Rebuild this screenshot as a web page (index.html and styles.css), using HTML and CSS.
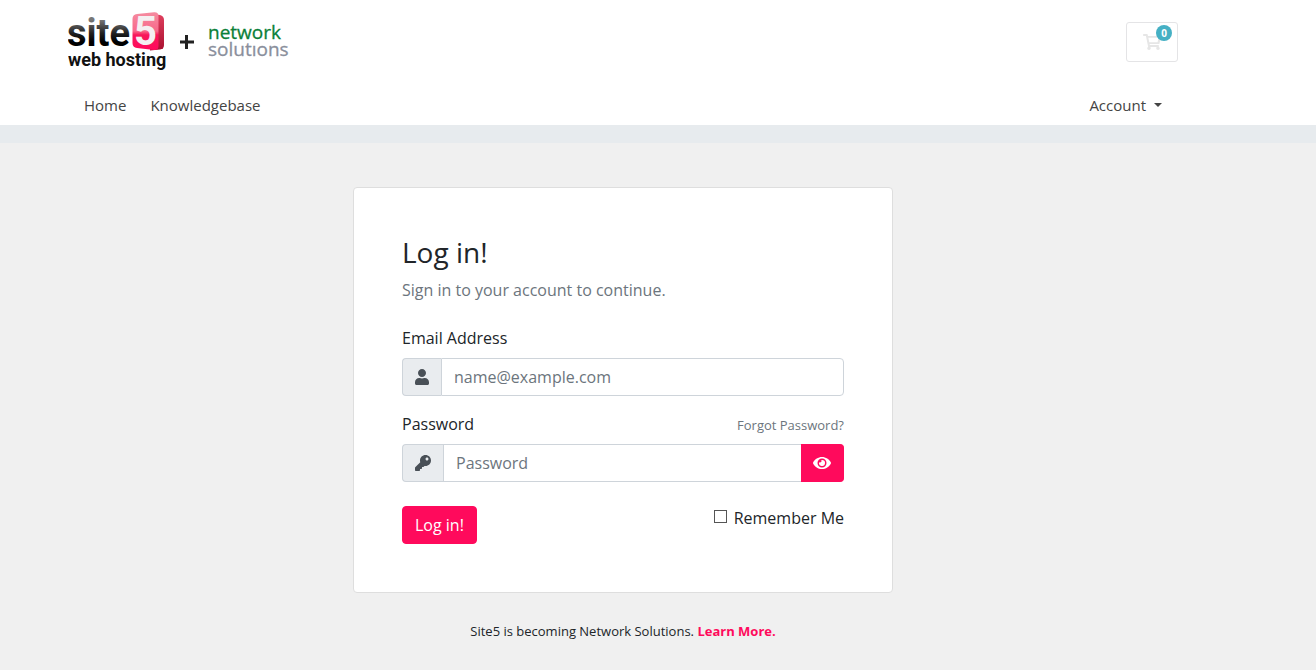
FILE: index.html
```html
<!DOCTYPE html>
<html lang="en">
<head>
<meta charset="utf-8">
<meta name="viewport" content="width=device-width, initial-scale=1">
<title>Log in - Site5</title>
<link rel="stylesheet" href="styles.css">
</head>
<body>
<header class="header">
  <div class="container topbar">
    <a class="brand" href="#" aria-label="Site5 web hosting and Network Solutions">
      <svg class="logo" width="226" height="64" viewBox="0 0 226 64">
        <defs>
          <linearGradient id="ink" x1="0" y1="0" x2="0" y2="1">
            <stop offset="0.2" stop-color="#777"/><stop offset="0.5" stop-color="#222"/><stop offset="0.7" stop-color="#000"/>
          </linearGradient>
          <linearGradient id="face" x1="0" y1="0" x2="0" y2="1">
            <stop offset="0" stop-color="#f58ca0"/><stop offset="0.5" stop-color="#f8688a"/><stop offset="0.6" stop-color="#f8175a"/><stop offset="1" stop-color="#ff0a5c"/>
          </linearGradient>
          <linearGradient id="side" x1="0" y1="0" x2="0" y2="1">
            <stop offset="0" stop-color="#e0405e"/><stop offset="1" stop-color="#a80f2f"/>
          </linearGradient>
        </defs>
        <text class="logo-site" x="-1" y="38" fill="url(#ink)">site</text>
        <path d="M84 6l8 1q4 1 4 5v25q0 4-4 4.500l-10 1z" fill="url(#side)"/>
        <path d="M69 6l17-1.800q4.500-.4 4.500 4V38q0 4.500-4.500 4L69 40q-4.500-.5-4.500-5V11q0-4.500 4.500-5z" fill="url(#face)"/>
        <text class="logo-five" x="66" y="37">5</text>
        <text class="logo-sub" x="0" y="58">web hosting</text>
        <path d="M118.500 27v14M112 34h14" stroke="#222" stroke-width="3"/>
        <text class="logo-network" x="140" y="31">network</text>
        <text class="logo-solutions" x="140" y="48">solutıons</text>
      </svg>
    </a>
    <button class="cart" type="button" aria-label="Shopping cart">
      <svg width="18" height="16" viewBox="0 0 576 512" fill="currentColor"><path d="M528.120 301.319l47.273-208C578.806 78.301 567.391 64 551.990 64H159.208l-9.166-44.810C147.758 8.021 137.930 0 126.529 0H24C10.745 0 0 10.745 0 24v16c0 13.255 10.745 24 24 24h69.883l70.248 343.435C147.325 417.100 136 435.222 136 456c0 30.928 25.072 56 56 56s56-25.072 56-56c0-15.674-6.447-29.835-16.824-40h209.647C430.447 426.165 424 440.326 424 456c0 30.928 25.072 56 56 56s56-25.072 56-56c0-22.172-12.888-41.332-31.579-50.405l5.517-24.276c3.413-15.018-8.002-29.319-23.403-29.319H218.117l-6.545-32h293.145c11.206 0 20.920-7.754 23.403-18.681zM171 122h327l-31 144H200z" fill-rule="evenodd"/></svg>
      <span class="badge">0</span>
    </button>
  </div>
  <nav class="container nav">
    <a href="#">Home</a>
    <a href="#">Knowledgebase</a>
    <a class="account" href="#">Account</a>
  </nav>
</header>
<div class="strip"></div>
<main class="main">
  <form class="card">
    <h1>Log in!</h1>
    <p class="lead">Sign in to your account to continue.</p>
    <label class="label" for="email">Email Address</label>
    <div class="group">
      <span class="addon"><svg width="14" height="16" viewBox="0 0 448 512" fill="currentColor"><path d="M224 256c70.700 0 128-57.300 128-128S294.700 0 224 0 96 57.300 96 128s57.300 128 128 128zm89.600 32h-16.700c-22.200 10.200-46.900 16-72.900 16s-50.600-5.800-72.900-16h-16.700C60.200 288 0 348.200 0 422.400V464c0 26.500 21.500 48 48 48h352c26.500 0 48-21.500 48-48v-41.600c0-74.200-60.200-134.400-134.400-134.400z"/></svg></span>
      <input class="input input-last" id="email" type="email" placeholder="name@example.com">
    </div>
    <div class="label-row">
      <label class="label" for="password">Password</label>
      <a class="forgot" href="#">Forgot Password?</a>
    </div>
    <div class="group">
      <span class="addon"><svg width="16" height="16" viewBox="0 0 512 512" fill="currentColor"><path d="M512 176.001C512 273.203 433.202 352 336 352c-11.220 0-22.190-1.062-32.827-3.069l-24.012 27.014A23.999 23.999 0 0 1 261.223 384H224v40c0 13.255-10.745 24-24 24h-40v40c0 13.255-10.745 24-24 24H24c-13.255 0-24-10.745-24-24v-78.059c0-6.365 2.529-12.470 7.029-16.971l161.802-161.802C163.108 213.814 160 195.271 160 176 160 78.798 238.797.001 335.999 0 433.488-.001 512 78.511 512 176.001zM336 128c0 26.510 21.490 48 48 48s48-21.490 48-48-21.490-48-48-48-48 21.490-48 48z"/></svg></span>
      <input class="input" id="password" type="password" placeholder="Password">
      <button class="reveal" type="button" aria-label="Show password"><svg width="18" height="16" viewBox="0 0 576 512" fill="currentColor"><path d="M572.520 241.400C518.290 135.590 410.930 64 288 64S57.680 135.640 3.480 241.410a32.350 32.350 0 0 0 0 29.190C57.710 376.410 165.070 448 288 448s230.320-71.640 284.520-177.410a32.350 32.350 0 0 0 0-29.190zM288 400a144 144 0 1 1 144-144 143.930 143.930 0 0 1-144 144zm0-240a95.310 95.310 0 0 0-25.310 3.790 47.850 47.850 0 0 1-66.900 66.900A95.780 95.780 0 1 0 288 160z"/></svg></button>
    </div>
    <div class="actions">
      <button class="submit" type="submit">Log in!</button>
      <label class="remember"><input class="check" type="checkbox">Remember Me</label>
    </div>
  </form>
  <p class="notice">Site5 is becoming Network Solutions. <a href="#">Learn More.</a></p>
</main>
</body>
</html>
```
FILE: styles.css
```css
* { box-sizing: border-box; }

body {
  margin: 0;
  background: #f0f0f0;
  color: #212529;
  font: 16px/24px "Open Sans", sans-serif;
}

a { text-decoration: none; }
button { font: inherit; cursor: pointer; }
svg { display: block; }

.header,
.main { padding-right: 70px; }

.header { background: #fff; }

.container {
  max-width: 1110px;
  margin: 0 auto;
  display: flex;
}

.topbar {
  padding: 8px 0 13px;
  align-items: center;
  justify-content: space-between;
}

.logo-site,
.logo-five,
.logo-sub { font-family: Roboto, sans-serif; font-weight: 700; }
.logo-site { font-size: 38px; }
.logo-five { font-size: 40px; fill: #f4f0f1; }
.logo-sub { font-size: 18px; fill: #111; }
.logo-network,
.logo-solutions { font-family: "Open Sans", sans-serif; font-size: 19px; }
.logo-network { fill: #0a8038; stroke: #0a8038; stroke-width: 0.3px; }
.logo-solutions { fill: #8a8f9c; stroke: #8a8f9c; stroke-width: 0.3px; }

.cart {
  position: relative;
  width: 52px;
  height: 40px;
  margin-top: 4px;
  padding: 0;
  display: flex;
  align-items: center;
  justify-content: center;
  background: #fff;
  border: 1px solid #e4e4e6;
  border-radius: 3px;
  color: #e6e6e6;
}

.badge {
  position: absolute;
  top: 2px;
  right: 5px;
  width: 16px;
  height: 16px;
  border-radius: 8px;
  background: #45b0c4;
  color: #fff;
  font-size: 10px;
  font-weight: 700;
  line-height: 16px;
  text-align: center;
}

.nav {
  padding: 8px 16px;
  gap: 24px;
  font-size: 15px;
}

.nav a { color: #444; }

.account {
  margin-left: auto;
  display: flex;
  align-items: center;
  gap: 8px;
}

.account::after {
  content: "";
  border: 4px solid transparent;
  border-top-color: currentColor;
  border-bottom: 0;
}

.strip { height: 18px; background: #e7ebee; }

.main { padding-top: 44px; }

.card {
  max-width: 540px;
  margin: 0 auto;
  padding: 48px;
  background: #fff;
  border: 1px solid #dedede;
  border-radius: 4px;
}

h1 {
  margin: 0 0 10px;
  font-size: 28px;
  font-weight: 400;
  line-height: 32px;
}

.lead { margin: 0 0 24px; color: #6c757d; }

.label { display: block; margin-bottom: 8px; }

.label-row {
  margin-top: 16px;
  display: flex;
  justify-content: space-between;
}

.forgot { color: #6c757d; font-size: 13px; line-height: 26px; }

.group { display: flex; height: 38px; }

.addon {
  padding: 0 12px;
  display: flex;
  align-items: center;
  background: #e9ecef;
  border: 1px solid #ced4da;
  border-right: 0;
  border-radius: 4px 0 0 4px;
  color: #495057;
}

.input {
  flex: 1;
  min-width: 0;
  padding: 6px 12px;
  background: #fff;
  border: 1px solid #ced4da;
  border-radius: 0;
  color: #495057;
  font: inherit;
}

.input::placeholder { color: #6c757d; opacity: 1; }
.input-last { border-radius: 0 4px 4px 0; }
#password { border-right: 0; }

.reveal,
.submit {
  padding: 6px 12px;
  background: #ff0a5c;
  border: 1px solid #ff0a5c;
  color: #fff;
}

.reveal {
  display: flex;
  align-items: center;
  border-left: 0;
  border-radius: 0 4px 4px 0;
}

.submit { border-radius: 4px; }

.actions {
  margin-top: 24px;
  display: flex;
  align-items: flex-start;
  justify-content: space-between;
}

.remember { display: flex; align-items: center; gap: 7px; }

.check {
  appearance: none;
  width: 13px;
  height: 13px;
  margin: 0 0 4px;
  background: #fff;
  border: 1px solid #555;
}

.check:checked { background: #ff0a5c; }

.notice {
  margin: 28px 0;
  font-size: 13px;
  line-height: 20px;
  text-align: center;
}

.notice a { color: #ff0a5c; font-weight: 700; }
```
